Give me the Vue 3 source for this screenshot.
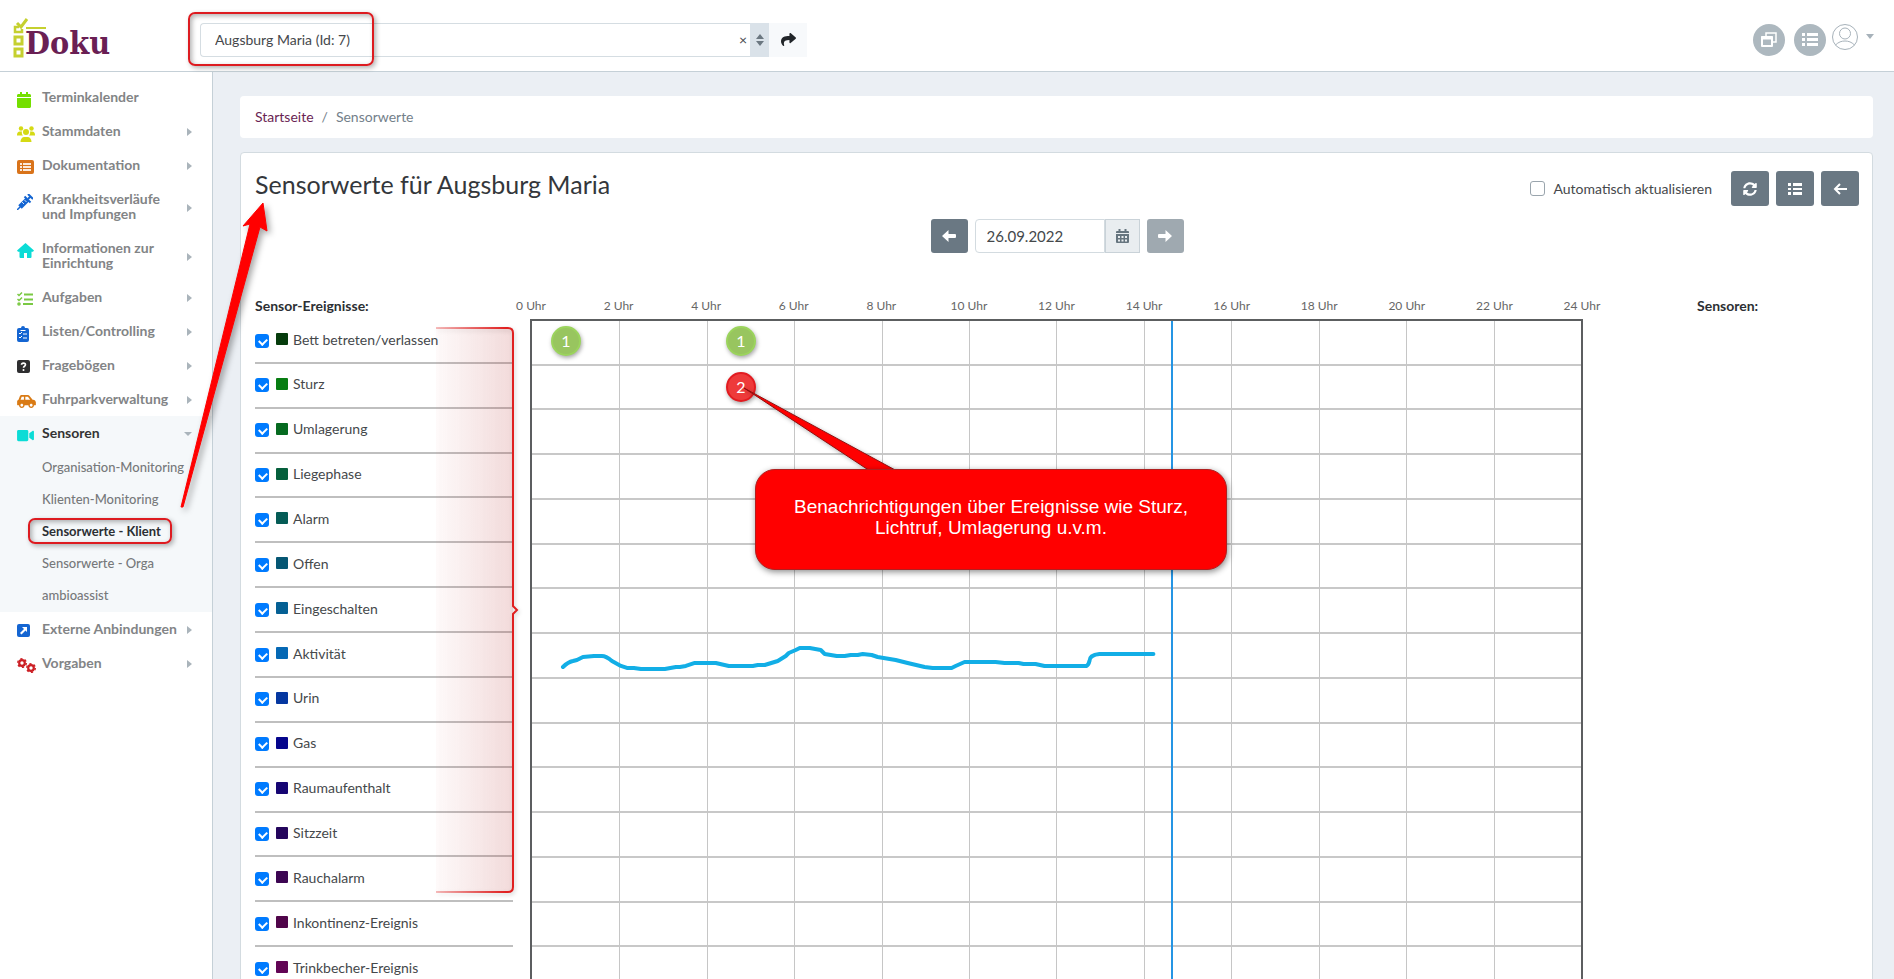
<script setup>
import { ref } from 'vue'

const menu = [
  { label: 'Terminkalender', icon: 'calendar', leaf: true },
  { label: 'Stammdaten', icon: 'users' },
  { label: 'Dokumentation', icon: 'listbox' },
  { label: 'Krankheitsverläufe und Impfungen', icon: 'syringe' },
  { label: 'Informationen zur Einrichtung', icon: 'home' },
  { label: 'Aufgaben', icon: 'tasks' },
  { label: 'Listen/Controlling', icon: 'clipboard' },
  { label: 'Fragebögen', icon: 'question' },
  { label: 'Fuhrparkverwaltung', icon: 'car' },
  {
    label: 'Sensoren',
    icon: 'video',
    open: true,
    children: ['Organisation-Monitoring', 'Klienten-Monitoring', 'Sensorwerte - Klient', 'Sensorwerte - Orga', 'ambioassist'],
  },
  { label: 'Externe Anbindungen', icon: 'external' },
  { label: 'Vorgaben', icon: 'cogs' },
]
const activeChild = 'Sensorwerte - Klient'

const events = ref([
  { name: 'Bett betreten/verlassen', color: '#063c0c', on: true },
  { name: 'Sturz', color: '#077d12', on: true },
  { name: 'Umlagerung', color: '#066a20', on: true },
  { name: 'Liegephase', color: '#055f3c', on: true },
  { name: 'Alarm', color: '#055c56', on: true },
  { name: 'Offen', color: '#055673', on: true },
  { name: 'Eingeschalten', color: '#056094', on: true },
  { name: 'Aktivität', color: '#0568b4', on: true },
  { name: 'Urin', color: '#0537a0', on: true },
  { name: 'Gas', color: '#05058c', on: true },
  { name: 'Raumaufenthalt', color: '#160573', on: true },
  { name: 'Sitzzeit', color: '#24055c', on: true },
  { name: 'Rauchalarm', color: '#3c0552', on: true },
  { name: 'Inkontinenz-Ereignis', color: '#50054a', on: true },
  { name: 'Trinkbecher-Ereignis', color: '#620555', on: true },
])

const hours = Array.from({ length: 13 }, (_, i) => i * 2)
const client = ref('Augsburg Maria (Id: 7)')
const date = ref('26.09.2022')
const autoRefresh = ref(false)
</script>

<template>
  <div class="app">
    <header class="topbar">
      <a class="logo" href="#" aria-label="Doku">
        <svg width="36" height="42" viewBox="0 0 36 42" fill="none" stroke="#c5d02f" stroke-width="3">
          <path d="M7 9H3V14H10V11" stroke-width="2.500" />
          <path d="M5 5l4 4 6-8" />
          <path d="M14 10h20" stroke-width="2" />
          <rect x="3" y="19" width="7" height="7" />
          <rect x="3" y="31" width="7" height="7" />
        </svg>
        <span class="logo-text">Doku</span>
      </a>
      <form class="picker" @submit.prevent>
        <input id="client" v-model="client" type="text" aria-label="Klient" />
        <button class="clear" type="button" aria-label="Leeren">×</button>
        <button class="handle" type="button" aria-label="Auswahl öffnen">
          <svg width="8" height="12" viewBox="0 0 8 12" fill="#6b7780"><path d="M4 0l4 5H0zM4 12l4-5H0z" /></svg>
        </button>
        <button class="go" type="submit" aria-label="Öffnen">
          <svg width="15" height="15" viewBox="0 0 512 512" fill="#212529"><path d="M503.691 189.836L327.687 37.851C312.281 24.546 288 35.347 288 56.015v80.053C127.371 137.907 0 170.1 0 322.326c0 61.441 39.581 122.309 83.333 154.132 13.653 9.931 33.111-2.533 28.077-18.631C66.066 312.814 132.917 274.316 288 272.085V360c0 20.7 24.3 31.453 39.687 18.164l176.004-152c11.071-9.562 11.086-26.753 0-36.328z" /></svg>
        </button>
        <span class="mark mark-client"></span>
      </form>
      <div class="tools">
        <button class="round" type="button" aria-label="Fenster">
          <svg width="18" height="18" viewBox="0 0 18 18" fill="none" stroke="#fff" stroke-width="2">
            <path d="M6 5V2h10v9h-3" stroke-width="1.5" />
            <path d="M2 6h10v9H2z" stroke-linejoin="round" />
            <path d="M1 7h12" stroke-width="3" />
          </svg>
        </button>
        <button class="round" type="button" aria-label="Liste">
          <svg width="18" height="16" viewBox="0 0 18 16" fill="#fff"><path d="M1 1h3v3H1zM6 1h11v3H6zM1 6h3v3H1zM6 6h11v3H6zM1 11h3v3H1zM6 11h11v3H6z" /></svg>
        </button>
        <button class="user" type="button" aria-label="Benutzer">
          <svg width="28" height="28" viewBox="0 0 28 28" fill="none" stroke="#a7b2ba" stroke-width="1">
            <circle cx="14" cy="14" r="12.5" /><circle cx="14" cy="10.5" r="5.5" /><path d="M4.5 22c3-3 6-4 9.500-4s6.500 1 9.500 4" />
          </svg>
          <svg width="8" height="5" viewBox="0 0 8 5" fill="#a7b2ba"><path d="M0 0h8L4 5z" /></svg>
        </button>
      </div>
    </header>

    <div class="body">
      <nav class="sidebar">
        <ul>
          <li v-for="m in menu" :key="m.label" :class="{ open: m.open }">
            <a href="#" class="item">
              <span class="icon">
                <svg v-if="m.icon === 'calendar'" width="14" height="16" viewBox="0 0 448 512" fill="#74df00"><path d="M12 192h424c6.600 0 12 5.400 12 12v260c0 26.500-21.500 48-48 48H48c-26.500 0-48-21.500-48-48V204c0-6.600 5.400-12 12-12zm436-44v-36c0-26.500-21.500-48-48-48h-48V12c0-6.600-5.400-12-12-12h-40c-6.600 0-12 5.400-12 12v52H160V12c0-6.600-5.400-12-12-12h-40c-6.600 0-12 5.400-12 12v52H48C21.500 64 0 85.500 0 112v36c0 6.600 5.400 12 12 12h424c6.600 0 12-5.400 12-12z" /></svg>
                <svg v-else-if="m.icon === 'users'" width="18" height="16" viewBox="0 0 18 16" fill="#d5da14"><circle cx="4" cy="2.500" r="2.200" /><circle cx="14.500" cy="2.500" r="2.200" /><circle cx="9" cy="6" r="3" /><path d="M0 9c0-2 1-3.500 3-3.500h2C4.500 7 5 8.500 6 9.500H0zM18 9c0-2-1-3.500-3-3.500h-2c.5 1.500 0 3-1 4h6zM3.500 16c0-3 1.500-5 4-5h3c2.500 0 4 2 4 5z" /></svg>
                <svg v-else-if="m.icon === 'listbox'" width="17" height="14" viewBox="0 0 17 14"><rect width="17" height="14" rx="2" fill="#d9731a" /><path d="M3 3h2v2H3zM6 3h8v2H6zM3 6h2v2H3zM6 6h8v2H6zM3 9h2v2H3zM6 9h8v2H6z" fill="#fff" opacity=".85" /></svg>
                <svg v-else-if="m.icon === 'syringe'" width="16" height="16" viewBox="0 0 16 16" fill="none" stroke="#1465d2"><path d="M0 16l4-4" stroke-width="1.500" /><path d="M3 13l7.500-7.500" stroke-width="5" /><path d="M11 5l2-2M11 0l5 5" stroke-width="2" /><path d="M7.500 2.500l6 6" stroke-width="2" /><path d="M5 8l2 2M7.500 6l2 2" stroke="#fff" stroke-width=".8" /></svg>
                <svg v-else-if="m.icon === 'home'" width="17" height="15" viewBox="0 0 17 15" fill="#0bdcd6"><path d="M8.500 0l8.500 7.500-1 1.200h-1.500V14q0 1-1 1H10v-5H7v5H3.500q-1 0-1-1V8.700H1L0 7.500z" /></svg>
                <svg v-else-if="m.icon === 'tasks'" width="16" height="14" viewBox="0 0 16 14" fill="none" stroke="#7ac943" stroke-width="2"><path d="M7 2.500h9M7 7.500h9M6 12h10" /><path d="M.5 2l1.500 1.500L5 .5M.5 7l1.500 1.500L5 5.500" stroke-width="1.500" /><circle cx="2" cy="12" r=".8" /></svg>
                <svg v-else-if="m.icon === 'clipboard'" width="12" height="16" viewBox="0 0 12 16"><path d="M2 2h2a2 2 0 014 0h2q2 0 2 2v10q0 2-2 2H2q-2 0-2-2V4q0-2 2-2z" fill="#1465d2" /><path d="M2 7l1 1 2-2M2 11l1 1 2-2M6 8h4M6 12h4M3.500 4.500h5" fill="none" stroke="#fff" /></svg>
                <svg v-else-if="m.icon === 'question'" width="13" height="13" viewBox="0 0 13 13"><rect width="13" height="13" rx="2" fill="#2e2e30" /><path d="M4.500 4.800c0-2.300 4-2.300 4 0 0 1.500-2 1.400-2 3" fill="none" stroke="#fff" stroke-width="1.600" /><circle cx="6.500" cy="10" r="1" fill="#fff" /></svg>
                <svg v-else-if="m.icon === 'car'" width="19" height="15" viewBox="0 0 640 512" fill="#d97a14"><path d="M544 192h-16L419.220 56.020A64.025 64.025 0 0 0 369.240 32H155.330c-26.170 0-49.700 15.930-59.420 40.230L48 194.260C20.440 201.400 0 226.210 0 256v112c0 8.840 7.160 16 16 16h48c0 53.020 42.980 96 96 96s96-42.980 96-96h128c0 53.020 42.980 96 96 96s96-42.980 96-96h48c8.840 0 16-7.160 16-16v-80c0-53.020-42.980-96-96-96zM160 432c-26.470 0-48-21.530-48-48s21.530-48 48-48 48 21.530 48 48-21.530 48-48 48zm72-240H116.930l38.400-96H232v96zm48 0V96h89.240l76.800 96H280zm200 240c-26.470 0-48-21.530-48-48s21.530-48 48-48 48 21.530 48 48-21.530 48-48 48z" /></svg>
                <svg v-else-if="m.icon === 'video'" width="17" height="15" viewBox="0 0 576 512" fill="#0bdcd6"><path d="M336.200 64H47.800C21.400 64 0 85.400 0 111.800v288.400C0 426.600 21.400 448 47.800 448h288.400c26.400 0 47.800-21.400 47.800-47.800V111.800c0-26.400-21.400-47.800-47.800-47.800zm189.400 37.700L416 177.300v157.400l109.600 75.500c21.200 14.600 50.400-.3 50.400-25.800V127.500c0-25.400-29.100-40.400-50.400-25.800z" /></svg>
                <svg v-else-if="m.icon === 'external'" width="13" height="13" viewBox="0 0 13 13"><rect width="13" height="13" rx="2" fill="#1465d2" /><path d="M5 3h5v5L8.500 6.500 4.500 10.500 3 9 7 5z" fill="#fff" /></svg>
                <svg v-else width="19" height="15" viewBox="0 0 19 15" fill="none" stroke="#cc1f24"><circle cx="5" cy="5" r="2.800" stroke-width="2.200" /><circle cx="5" cy="5" r="4.300" stroke-width="1.400" stroke-dasharray="2.200 2.300" /><circle cx="14" cy="10" r="2.800" stroke-width="2.200" /><circle cx="14" cy="10" r="4.300" stroke-width="1.400" stroke-dasharray="2.200 2.300" /></svg>
              </span>
              <span class="text">{{ m.label }}</span>
              <span v-if="!m.leaf" class="caret" :class="{ down: m.open }"></span>
            </a>
            <ul v-if="m.children" class="sub">
              <li v-for="c in m.children" :key="c">
                <a href="#" :class="{ active: c === activeChild }">{{ c }}<span v-if="c === activeChild" class="mark mark-item"></span></a>
              </li>
            </ul>
          </li>
        </ul>
      </nav>

      <main>
        <nav class="crumbs" aria-label="Pfad">
          <a href="#">Startseite</a><span>/</span><span>Sensorwerte</span>
        </nav>

        <section class="card">
          <div class="head">
            <h1>Sensorwerte für Augsburg Maria</h1>
            <div class="actions">
              <label class="auto"><input v-model="autoRefresh" type="checkbox" />Automatisch aktualisieren</label>
              <button class="btn" type="button" aria-label="Aktualisieren">
                <svg width="14" height="14" viewBox="0 0 512 512" fill="#fff"><path d="M370.720 133.280C339.458 104.008 298.888 87.962 255.848 88c-77.458.068-144.328 53.178-162.791 126.850-1.344 5.363-6.122 9.150-11.651 9.150H24.103c-7.498 0-13.194-6.807-11.807-14.176C33.933 94.924 134.813 8 256 8c66.448 0 126.791 26.136 171.315 68.685L463.030 40.970C478.149 25.851 504 36.559 504 57.941V192c0 13.255-10.745 24-24 24H345.941c-21.382 0-32.090-25.851-16.971-40.971l41.750-41.749zM32 296h134.059c21.382 0 32.090 25.851 16.971 40.971l-41.750 41.750c31.262 29.273 71.835 45.319 114.876 45.280 77.418-.070 144.315-53.144 162.787-126.849 1.344-5.363 6.122-9.150 11.651-9.150h57.304c7.498 0 13.194 6.807 11.807 14.176C478.067 417.076 377.187 504 256 504c-66.448 0-126.791-26.136-171.315-68.685L48.970 471.030C33.851 486.149 8 475.441 8 454.059V320c0-13.255 10.745-24 24-24z" /></svg>
              </button>
              <button class="btn" type="button" aria-label="Liste">
                <svg width="14" height="12" viewBox="0 0 14 12" fill="#fff"><path d="M0 0h3v3H0zM5 0h9v3H5zM0 5h3v2H0zM5 5h9v2H5zM0 9h3v3H0zM5 9h9v3H5z" /></svg>
              </button>
              <button class="btn" type="button" aria-label="Zurück">
                <svg width="14" height="12" viewBox="0 0 14 12" fill="none" stroke="#fff" stroke-width="2"><path d="M7 1L2 6l5 5M2 6h12" /></svg>
              </button>
            </div>
          </div>

          <div class="dates">
            <button class="btn" type="button" aria-label="Vorheriger Tag">
              <svg width="14" height="12" viewBox="0 0 14 12" fill="#fff"><path d="M6.500 0v4H13q1 0 1 1v2q0 1-1 1H6.500v4L0 6z" /></svg>
            </button>
            <div class="date">
              <input v-model="date" type="text" aria-label="Datum" />
              <button type="button" aria-label="Kalender">
                <svg width="13" height="14" viewBox="0 0 13 14"><path d="M1 2h1.500V0h2v2h4V0h2v2H12q1 0 1 1v1H0V3q0-1 1-1zM0 5h13v8q0 1-1 1H1q-1 0-1-1z" fill="#66757f" /><path d="M2 7h2v2H2zM5.500 7h2v2h-2zM9 7h2v2H9zM2 10.500h2v2H2zM5.500 10.500h2v2h-2zM9 10.500h2v2H9z" fill="#e9edf0" /></svg>
              </button>
            </div>
            <button class="btn" type="button" aria-label="Nächster Tag" disabled>
              <svg width="14" height="12" viewBox="0 0 14 12" fill="#fff"><path d="M7.500 0v4H1Q0 4 0 5v2q0 1 1 1h6.500v4L14 6z" /></svg>
            </button>
          </div>

          <div class="board">
            <div class="events">
              <h2>Sensor-Ereignisse:</h2>
              <ul class="rows">
                <li v-for="e in events" :key="e.name">
                  <label><input v-model="e.on" type="checkbox" /><i :style="{ background: e.color }"></i>{{ e.name }}</label>
                </li>
              </ul>
              <svg class="bracket" width="90" height="576" viewBox="0 0 90 576">
                <defs>
                  <linearGradient id="fade" x1="0" x2="1"><stop offset="0" stop-color="#e05050" stop-opacity="0.03" /><stop offset="1" stop-color="#d84040" stop-opacity="0.16" /></linearGradient>
                  <linearGradient id="edge" gradientUnits="userSpaceOnUse" x1="0" x2="70"><stop offset="0" stop-color="#e02020" stop-opacity="0.3" /><stop offset="1" stop-color="#e02020" /></linearGradient>
                </defs>
                <path d="M0 3H72q5 0 5 5V562q0 5-5 5H0z" fill="url(#fade)" />
                <path d="M0 3H72q5 0 5 5V281l4 4-4 4V562q0 5-5 5H0" fill="none" stroke="url(#edge)" stroke-width="2" />
              </svg>
            </div>

            <div class="timeline">
              <div class="hours"><span v-for="h in hours" :key="h">{{ h }} Uhr</span></div>
              <div class="chart">
                <div class="lanes"><i v-for="e in events" :key="e.name"></i></div>
                <div class="ticks"><i v-for="n in 12" :key="n"></i></div>
                <svg class="curve" viewBox="0 0 1050 673" preserveAspectRatio="none">
                  <path d="M31 347Q36 342 41 341L45 340L51 337L62 336H70Q74 336 80 341L89 346L95 348H102L109 349H133L144 347H148L154 346L163 343H184L197 346H221L226 345H233L246 341L254 336L257 333L264 330L268 328L278 328L289 330L293 334L305 336H313L319 335H326L331 334L340 335L346 337L364 340L376 343L393 347L401 348H420L424 346L433 342H464L473 343H487L492 344H504L513 346H555Q557 345 558 341Q558 335 568 334H622" />
                </svg>
                <span class="now"></span>
                <span class="pin green first">1</span>
                <span class="pin green second">1</span>
                <span class="pin red">2</span>
                <svg class="pointer" width="160" height="90" viewBox="0 0 160 90"><path d="M2 2L128 85H155z" fill="#f00" stroke="#901010" stroke-width="1" /></svg>
                <div class="callout">Benachrichtigungen über Ereignisse wie Sturz, Lichtruf, Umlagerung u.v.m.</div>
              </div>
            </div>

            <h2 class="sensors">Sensoren:</h2>
          </div>
        </section>
      </main>
    </div>

    <svg class="arrow" width="100" height="320" viewBox="0 0 100 320"><path d="M2 312L71 29 64 31 84 8 88 36 81 32 4 312z" fill="#f00" stroke="#f00" stroke-width="1" /></svg>
  </div>
</template>

<style>
body { margin: 0; }
</style>

<style scoped>
* { box-sizing: border-box; }
.app {
  position: relative;
  display: flex;
  flex-direction: column;
  height: 100vh;
  overflow: hidden;
  font-family: Lato, "Open Sans", sans-serif;
  font-size: 14px;
  color: #45484b;
  background: #ebeff4;
}
button, input { font: inherit; color: inherit; }
button { display: flex; align-items: center; justify-content: center; padding: 0; border: 0; background: none; }
ul { list-style: none; margin: 0; padding: 0; }
a { text-decoration: none; }

.topbar { display: flex; align-items: center; flex: none; height: 72px; padding: 8px 20px 0 12px; background: #fff; border-bottom: 1px solid #c5d0d7; }
.logo { display: flex; width: 188px; height: 44px; }
.logo svg { flex: none; }
.logo-text { margin-left: -23px; padding-top: 4px; font: bold 32px/42px "DejaVu Serif Condensed", "DejaVu Serif", serif; color: #6a1f54; }
.picker { position: relative; display: flex; width: 607px; height: 34px; }
.picker input { flex: 1; min-width: 0; padding: 0 14px; border: 1px solid #d5dde2; border-right: 0; border-radius: 4px 0 0 4px; background: #fff; outline: 0; }
.clear { width: 14px; border: solid #d5dde2; border-width: 1px 0; background: #fff; }
.handle { width: 19px; background: #dae2e9; }
.go { width: 38px; background: #f7f9fb; }
.mark { position: absolute; border: 2px solid #dd1b20; border-radius: 7px; box-shadow: 2px 2px 5px rgba(0, 0, 0, .3), inset 2px 2px 5px rgba(0, 0, 0, .3); pointer-events: none; }
.mark-client { left: -12px; top: -11px; width: 186px; height: 54px; }
.tools { display: flex; align-items: center; gap: 9px; margin-left: auto; }
.round { width: 32px; height: 32px; border-radius: 50%; background: #adb8bf; }
.user { gap: 7px; margin-left: -4px; padding-bottom: 6px; }

.body { display: flex; flex: 1; min-height: 0; }
.sidebar { flex: none; width: 213px; padding-top: 8px; background: #fff; border-right: 1px solid #c5d0d7; }
.item { display: flex; align-items: center; padding: 9px 17px 10px; line-height: 15px; font-weight: 700; color: #828486; }
.icon { flex: none; align-self: flex-start; width: 25px; height: 15px; }
.icon svg { display: block; margin-top: 3px; }
.text { max-width: 142px; }
.open .item { color: #333; }
.caret { flex: none; margin: 3px -3px 0 auto; position: relative; right: 6px; border: solid transparent; border-width: 4px 0 4px 5px; border-left-color: #aab4bb; }
.caret.down { border-width: 4px 4px 0; border-color: #aab4bb transparent transparent; }
.open { padding-bottom: 1px; background: #f5f8fa; }
.sub { padding-top: 1px; }
.sub a { position: relative; display: block; width: fit-content; margin-left: 42px; font-size: 13px; line-height: 32px; font-weight: 500; color: #77797b; }
.sub a.active { font-weight: 700; color: #2c2f33; }
.mark-item { left: -14px; right: -11px; top: 3px; bottom: 3px; }

main { flex: 1; min-width: 0; padding: 24px 21px 0 27px; overflow: hidden; }
.crumbs { display: flex; gap: 8px; padding: 0 15px; line-height: 42px; border-radius: 4px; background: #fff; color: #73808a; }
.crumbs a { color: #6a1f54; }
.card { min-height: 860px; margin-top: 14px; padding: 18px 13px 0 14px; border: 1px solid #d3dbe0; border-radius: 4px; background: #fff; }
.head { display: flex; justify-content: space-between; height: 48px; }
h1 { margin: 0; font-size: 25px; line-height: 26px; font-weight: 400; color: #34373b; }
.actions { display: flex; gap: 7px; height: 35px; }
.auto { display: flex; align-items: center; gap: 8px; margin-right: 12px; padding-bottom: 1px; }
input[type="checkbox"] { appearance: none; flex: none; width: 14px; height: 14px; margin: 0; border: 1px solid #9aa5ad; border-radius: 3px; background: #fff; }
.auto input[type="checkbox"] { width: 15px; height: 15px; }
.btn { width: 38px; height: 35px; border-radius: 3px; background: #6a7883; }
.btn:disabled { background: #9fa9b0; }
.dates { display: flex; justify-content: center; gap: 7px; }
.dates .btn { width: 37px; height: 34px; }
.date { display: flex; width: 165px; height: 34px; }
.date input { width: 130px; padding: 0 11px; border: 1px solid #d3dbe0; border-radius: 4px 0 0 4px; font-size: 15px; }
.date button { flex: 1; border: 1px solid #c9d2d8; background: #e9edf0; }

.board { display: grid; grid-template-columns: 258px minmax(0, 1fr) 276px; margin-top: 40px; }
.events { position: relative; }
h2 { margin: 0; font-size: 14px; line-height: 26px; font-weight: 700; color: #2c2f33; }
.rows { display: grid; grid-auto-rows: 1fr; min-height: 673px; }
.rows li { border-bottom: 2px solid #bfbfbf; }
.rows label { display: flex; align-items: center; height: 40px; }
.rows input[type="checkbox"] { position: relative; margin: 3px 7px 0 0; border: 0; background: #007bff; }
.rows input:checked::after { content: ""; position: absolute; left: 4px; top: 4px; width: 6px; height: 4px; border: solid #fff; border-width: 0 0 2px 2px; transform: rotate(-45deg); }
.rows i { width: 12px; height: 12px; margin-right: 5px; border-radius: 1px; }
.bracket { position: absolute; left: 181px; top: 32px; filter: drop-shadow(1px 2px 2px rgba(0, 0, 0, .2)); pointer-events: none; }

.timeline { margin-left: 17px; }
.hours { display: flex; justify-content: space-between; height: 26px; line-height: 26px; font-size: 12px; color: #666; }
.hours span { display: flex; justify-content: center; width: 2px; white-space: nowrap; }
.chart { position: relative; min-height: 673px; border: 2px solid #5c5e60; border-bottom: 0; }
.lanes, .ticks, .curve { position: absolute; inset: 0; width: 100%; height: 100%; }
.lanes { display: grid; grid-auto-rows: 1fr; }
.lanes i { border-bottom: 2px solid #c8c8c8; }
.ticks { display: grid; grid-template-columns: repeat(12, 1fr); }
.ticks i + i { border-left: 1px solid #c6c6c6; }
.curve path { fill: none; stroke: #12aee6; stroke-width: 4; stroke-linecap: round; stroke-linejoin: round; }
.now { position: absolute; top: 0; bottom: 0; left: 61%; width: 2px; margin-left: -1px; background: #2595e4; }
.pin { position: absolute; width: 30px; height: 30px; border: 2px solid #9bd45c; border-radius: 50%; background: #98c55f; font-size: 16px; line-height: 26px; text-align: center; color: #fff; box-shadow: 1px 2px 4px rgba(0, 0, 0, .35); }
.first { left: 19px; top: 5px; }
.second { left: 194px; top: 5px; }
.red { left: 194px; top: 51px; border-color: #e21b20; background: #ee3a3a; }
.pointer { position: absolute; left: 210px; top: 65px; filter: drop-shadow(2px 2px 2px rgba(0, 0, 0, .3)); }
.callout { position: absolute; left: 223px; top: 148px; width: 472px; padding: 26px 30px 31px; border: 1px solid #b02020; border-radius: 20px; background: #f00; box-shadow: 1px 2px 6px rgba(0, 0, 0, .45); font: 19px/21px "Liberation Sans", Arial, sans-serif; text-align: center; color: #fff; }
.sensors { padding-left: 114px; }
.arrow { position: absolute; left: 179px; top: 195px; filter: drop-shadow(3px 3px 3px rgba(0, 0, 0, .35)); pointer-events: none; }
</style>
